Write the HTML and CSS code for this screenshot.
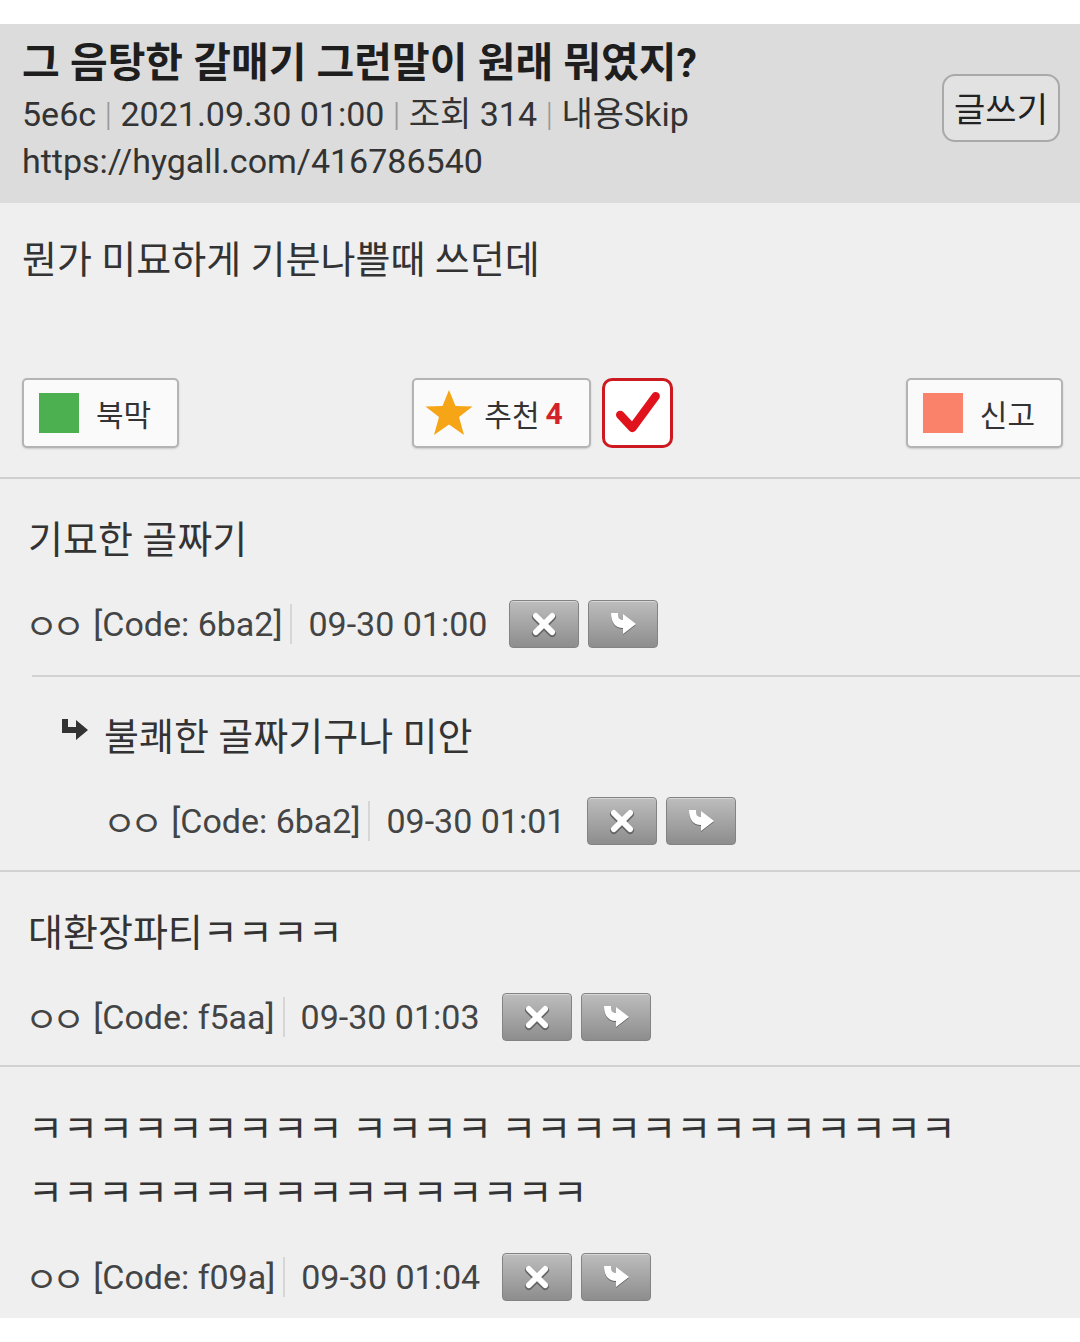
FILE: index.html
```html
<!DOCTYPE html>
<html lang="ko">
<head>
    <meta charset="UTF-8">
    <meta name="viewport" content="width=device-width, initial-scale=1.0">
    <title>그 음탕한 갈매기 그런말이 원래 뭐였지?</title>
    <link rel="stylesheet" href="styles.css">
</head>
<body>
    <div class="page">
        <div class="post-head">
            <div class="head-info">
                <h1>그 음탕한 갈매기 그런말이 원래 뭐였지?</h1>
                <div class="head-meta">5e6c <span class="bar">|</span> 2021.09.30 01:00 <span class="bar">|</span> 조회 314 <span class="bar">|</span> 내용Skip</div>
                <div class="head-url">https://hygall.com/416786540</div>
            </div>
            <button class="write-btn">글쓰기</button>
        </div>

        <div class="post-body">
            <p class="post-text">뭔가 미묘하게 기분나쁠때 쓰던데</p>
            <div class="post-actions">
                <button class="act-btn"><span class="swatch green"></span>북막</button>
                <div class="act-center">
                    <button class="act-btn recommend">
                        <svg class="star" viewBox="0 0 50 48" width="50" height="48"><polygon points="25,1 31.5,17 48.5,17.5 35,28 40,46 25,35.5 10,46 15,28 1.5,17.5 18.5,17" fill="#f5a516"/></svg>
                        추천 <b class="count">4</b>
                    </button>
                    <div class="check-box">
                        <svg viewBox="0 0 60 60" width="56" height="56"><polyline points="12,32 25,46 50,12" fill="none" stroke="#e0121b" stroke-width="9" stroke-linecap="round" stroke-linejoin="round"/></svg>
                    </div>
                </div>
                <button class="act-btn"><span class="swatch salmon"></span>신고</button>
            </div>
        </div>

        <div class="comment">
            <p class="c-text">기묘한 골짜기</p>
            <div class="c-meta">
                <span class="nick">ㅇㅇ</span>[Code: 6ba2]<span class="sep"></span>09-30 01:00
                <div class="tools">
                    <span class="tool"><svg viewBox="0 0 24 24" width="28" height="28"><path d="M5 5 L19 19 M19 5 L5 19" stroke="#666" stroke-width="6.5" stroke-linecap="round" transform="translate(0 1)"/><path d="M5 5 L19 19 M19 5 L5 19" stroke="#fff" stroke-width="5" stroke-linecap="round"/></svg></span>
                    <span class="tool"><svg viewBox="0 0 30 28" width="30" height="28"><path d="M3 3 L10 3 C10 8 11 10 15 10 L15 4 L28 14 L15 24 L15 18 C7 18 3 12 3 3 Z" fill="#666" transform="translate(0 1)"/><path d="M3 3 L10 3 C10 8 11 10 15 10 L15 4 L28 14 L15 24 L15 18 C7 18 3 12 3 3 Z" fill="#fff"/></svg></span>
                </div>
            </div>
        </div>
        <div class="divider indent"></div>

        <div class="comment reply">
            <p class="c-text"><svg class="reply-mark" viewBox="0 0 30 24" width="30" height="24"><polygon points="2,1 8,1 8,9 16,9 16,2 28,12 16,22 16,15 2,15" fill="#333"/></svg>불쾌한 골짜기구나 미안</p>
            <div class="c-meta">
                <span class="nick">ㅇㅇ</span>[Code: 6ba2]<span class="sep"></span>09-30 01:01
                <div class="tools">
                    <span class="tool"><svg viewBox="0 0 24 24" width="28" height="28"><path d="M5 5 L19 19 M19 5 L5 19" stroke="#666" stroke-width="6.5" stroke-linecap="round" transform="translate(0 1)"/><path d="M5 5 L19 19 M19 5 L5 19" stroke="#fff" stroke-width="5" stroke-linecap="round"/></svg></span>
                    <span class="tool"><svg viewBox="0 0 30 28" width="30" height="28"><path d="M3 3 L10 3 C10 8 11 10 15 10 L15 4 L28 14 L15 24 L15 18 C7 18 3 12 3 3 Z" fill="#666" transform="translate(0 1)"/><path d="M3 3 L10 3 C10 8 11 10 15 10 L15 4 L28 14 L15 24 L15 18 C7 18 3 12 3 3 Z" fill="#fff"/></svg></span>
                </div>
            </div>
        </div>
        <div class="divider"></div>

        <div class="comment">
            <p class="c-text">대환장파티ㅋㅋㅋㅋ</p>
            <div class="c-meta">
                <span class="nick">ㅇㅇ</span>[Code: f5aa]<span class="sep"></span>09-30 01:03
                <div class="tools">
                    <span class="tool"><svg viewBox="0 0 24 24" width="28" height="28"><path d="M5 5 L19 19 M19 5 L5 19" stroke="#666" stroke-width="6.5" stroke-linecap="round" transform="translate(0 1)"/><path d="M5 5 L19 19 M19 5 L5 19" stroke="#fff" stroke-width="5" stroke-linecap="round"/></svg></span>
                    <span class="tool"><svg viewBox="0 0 30 28" width="30" height="28"><path d="M3 3 L10 3 C10 8 11 10 15 10 L15 4 L28 14 L15 24 L15 18 C7 18 3 12 3 3 Z" fill="#666" transform="translate(0 1)"/><path d="M3 3 L10 3 C10 8 11 10 15 10 L15 4 L28 14 L15 24 L15 18 C7 18 3 12 3 3 Z" fill="#fff"/></svg></span>
                </div>
            </div>
        </div>
        <div class="divider"></div>

        <div class="comment long">
            <p class="c-text">ㅋㅋㅋㅋㅋㅋㅋㅋㅋ ㅋㅋㅋㅋ ㅋㅋㅋㅋㅋㅋㅋㅋㅋㅋㅋㅋㅋ<br>ㅋㅋㅋㅋㅋㅋㅋㅋㅋㅋㅋㅋㅋㅋㅋㅋ</p>
            <div class="c-meta">
                <span class="nick">ㅇㅇ</span>[Code: f09a]<span class="sep"></span>09-30 01:04
                <div class="tools">
                    <span class="tool"><svg viewBox="0 0 24 24" width="28" height="28"><path d="M5 5 L19 19 M19 5 L5 19" stroke="#666" stroke-width="6.5" stroke-linecap="round" transform="translate(0 1)"/><path d="M5 5 L19 19 M19 5 L5 19" stroke="#fff" stroke-width="5" stroke-linecap="round"/></svg></span>
                    <span class="tool"><svg viewBox="0 0 30 28" width="30" height="28"><path d="M3 3 L10 3 C10 8 11 10 15 10 L15 4 L28 14 L15 24 L15 18 C7 18 3 12 3 3 Z" fill="#666" transform="translate(0 1)"/><path d="M3 3 L10 3 C10 8 11 10 15 10 L15 4 L28 14 L15 24 L15 18 C7 18 3 12 3 3 Z" fill="#fff"/></svg></span>
                </div>
            </div>
        </div>
    </div>
</body>
</html>
```

FILE: styles.css
```css
body {
    margin: 0;
    background: #fff;
    font-family: Roboto, "Noto Sans CJK KR", sans-serif;
    color: #333;
}
.page {
    margin-top: 24px;
    background: #efefef;
}
.post-head {
    display: flex;
    align-items: center;
    justify-content: space-between;
    background: #dcdcdc;
    padding: 13px 20px 18px 22px;
}
h1 {
    margin: 0;
    font-size: 41px;
    line-height: 52px;
    font-weight: bold;
    color: #1e1e1e;
}
.head-meta,
.head-url {
    font-size: 34px;
    line-height: 47px;
    color: #333;
}
.head-meta {
    margin-top: 2px;
}
.bar {
    color: #999;
    font-weight: 300;
}
.write-btn {
    margin-top: -7px;
    width: 118px;
    height: 68px;
    border: 2px solid #a9a9a9;
    border-radius: 13px;
    background: #e2e2e2;
    font-family: inherit;
    font-size: 34px;
    color: #222;
    padding: 0;
}
.post-body {
    padding: 32px 17px 29px 22px;
    border-bottom: 2px solid #cfcfcf;
}
.post-text {
    margin: 0;
    font-size: 38px;
    line-height: 50px;
    color: #333;
}
.post-actions {
    margin-top: 93px;
    display: flex;
    justify-content: space-between;
    align-items: center;
}
.act-center {
    display: flex;
    gap: 11px;
}
.act-btn {
    display: flex;
    align-items: center;
    height: 70px;
    padding: 0 26px 0 15px;
    border: 2px solid #b4b4b4;
    border-radius: 5px;
    background: #fafafa;
    box-shadow: 0 1px 2px rgba(0,0,0,0.15);
    font-family: inherit;
    font-size: 30px;
    color: #333;
}
.swatch {
    width: 40px;
    height: 40px;
    margin-right: 17px;
}
.green { background: #4caf50; }
.salmon { background: #fb826a; }
.recommend {
    padding: 0 26px 0 10px;
}
.star {
    margin-right: 10px;
}
.count {
    color: #d3232a;
    margin-left: 6px;
}
.check-box {
    width: 65px;
    height: 64px;
    border: 3px solid #cc1a20;
    border-radius: 10px;
    background: #fff;
    display: flex;
    align-items: center;
    justify-content: center;
}
.comment {
    padding: 36px 0 24px 28px;
}
.comment.reply {
    padding: 35px 0 25px 60px;
}
.comment.long {
    padding: 30px 0 17px 28px;
}
.c-text {
    margin: 0;
    font-size: 38px;
    line-height: 50px;
    color: #333;
    display: flex;
    align-items: center;
}
.long .c-text {
    display: block;
    line-height: 64px;
}
.reply-mark {
    margin-right: 14px;
    margin-top: -14px;
}
.reply .c-meta {
    margin-left: 46px;
}
.c-meta {
    margin-top: 35px;
    display: flex;
    align-items: center;
    height: 48px;
    font-size: 34px;
    color: #444;
}
.long .c-meta {
    margin-top: 28px;
}
.nick {
    font-size: 36px;
    letter-spacing: -6px;
    margin: 0 14px 0 -3px;
}
.sep {
    width: 2px;
    height: 40px;
    background: #d6d6d6;
    margin: 0 16px 0 8px;
}
.tools {
    display: flex;
    gap: 9px;
    margin-left: 22px;
}
.tool {
    width: 70px;
    height: 48px;
    border: 1px solid #838383;
    border-radius: 4px;
    background: linear-gradient(#bdbdbd, #8d8d8d);
    box-shadow: inset 0 1px 0 rgba(255,255,255,0.4);
    box-sizing: border-box;
    display: flex;
    align-items: center;
    justify-content: center;
}
.divider {
    border-top: 2px solid #d2d2d2;
}
.divider.indent {
    margin: 3px 0 0 32px;
}
```
